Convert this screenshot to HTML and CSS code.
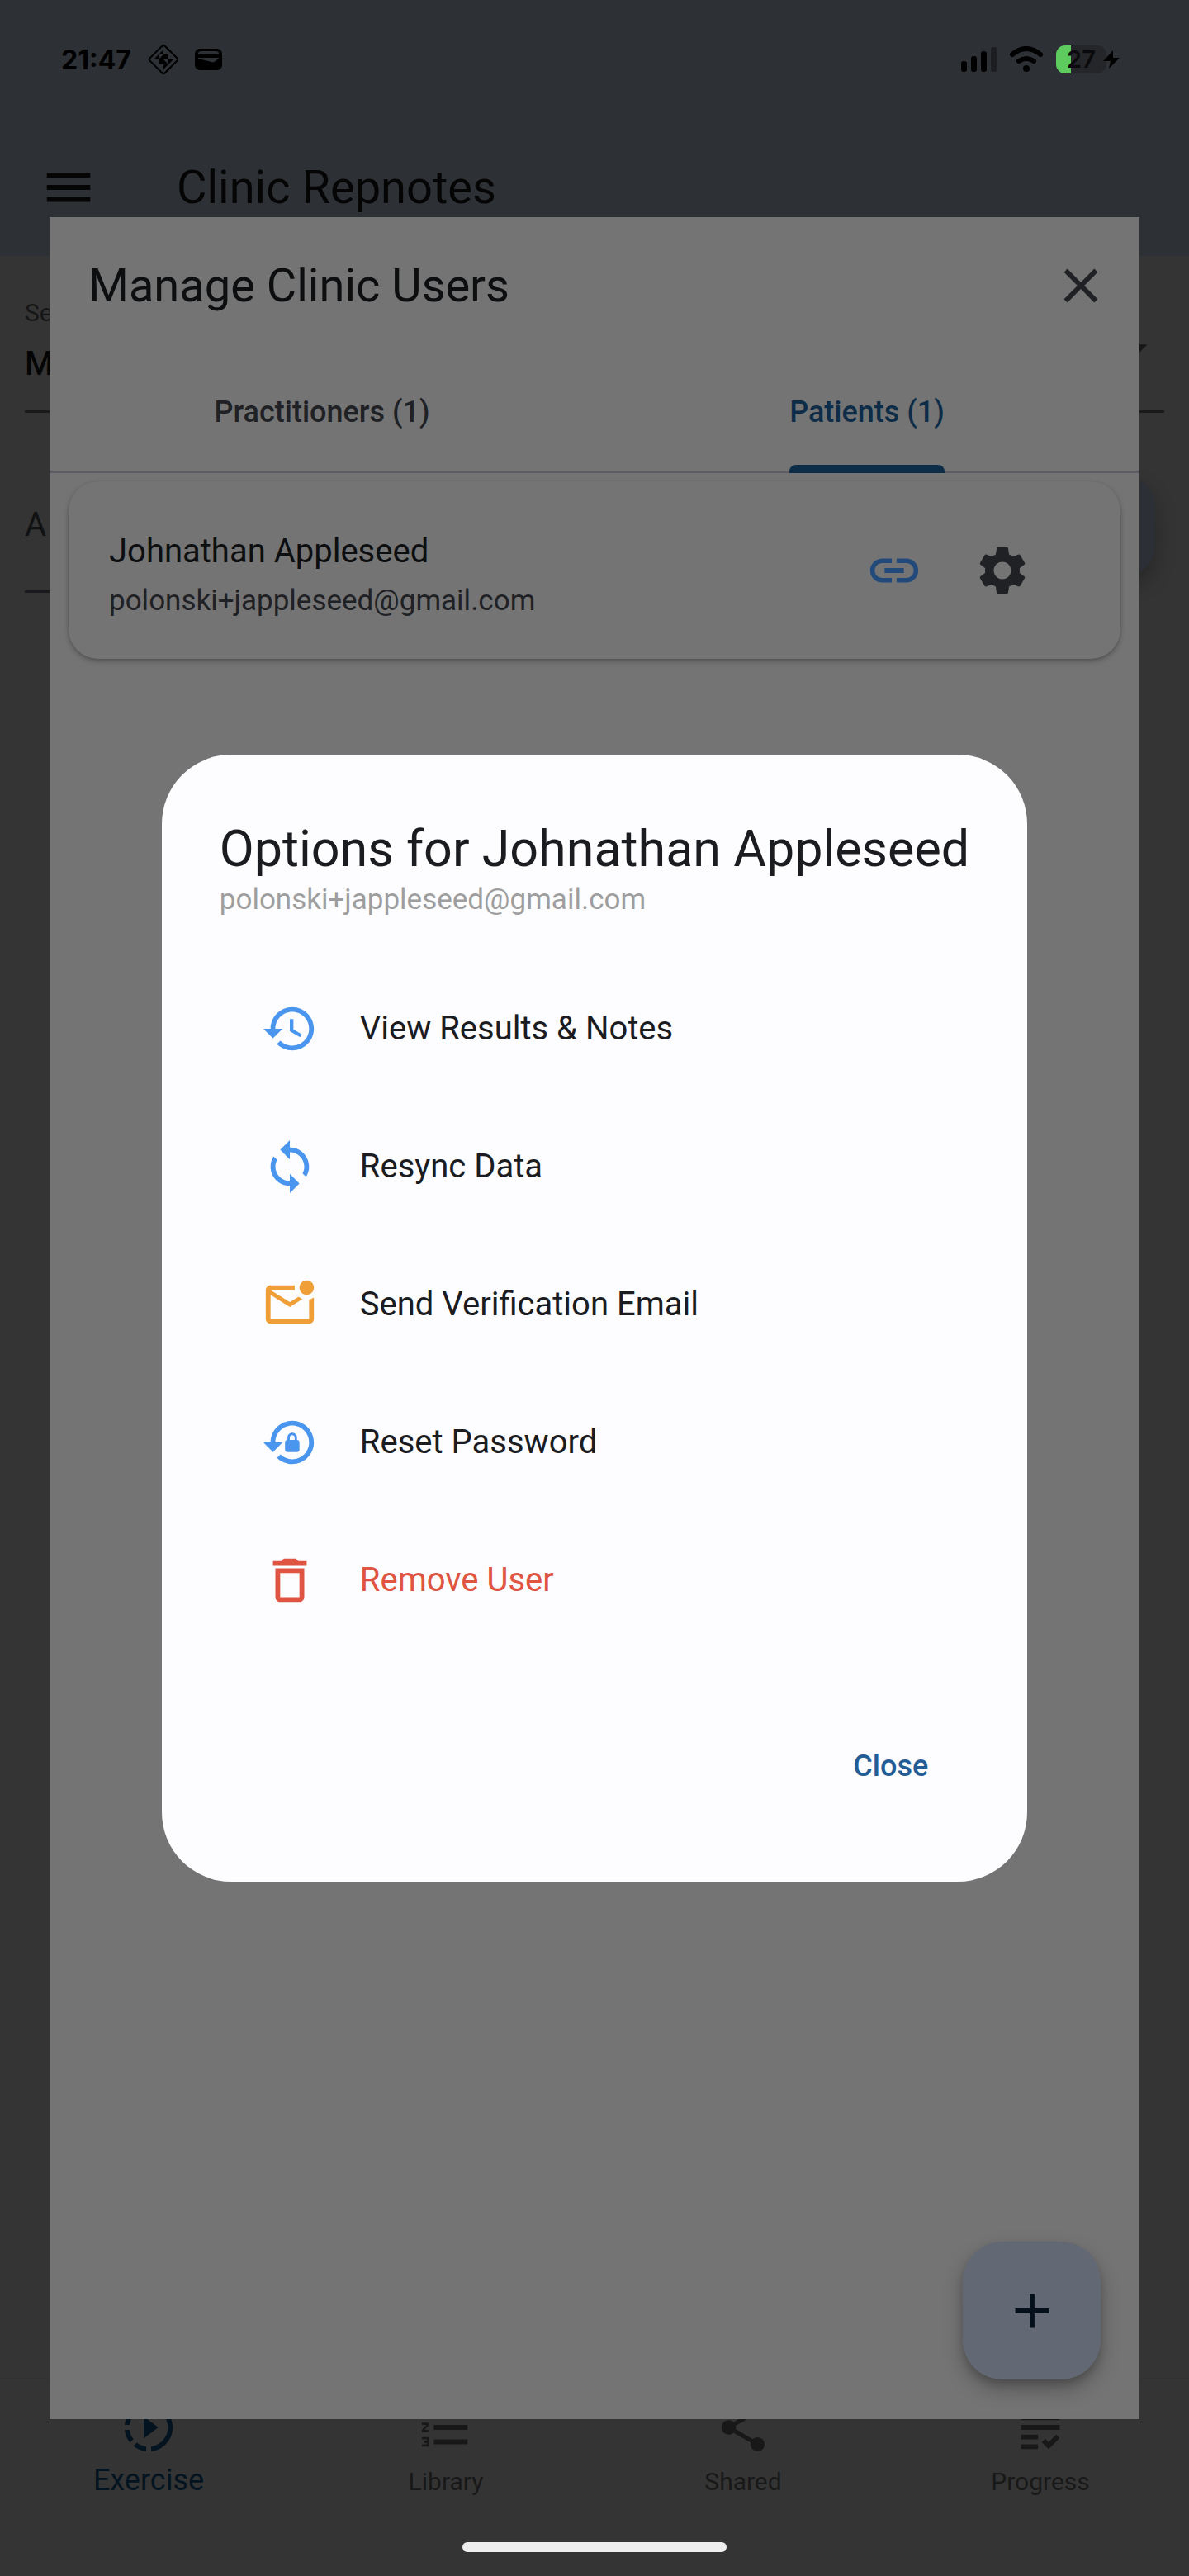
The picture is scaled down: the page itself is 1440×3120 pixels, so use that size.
FILE: index.html
```html
<!DOCTYPE html>
<html lang="en">
<head>
    <meta charset="UTF-8">
    <meta name="viewport" content="width=device-width, initial-scale=1.0">
    <title>Clinic Repnotes</title>
    <link rel="stylesheet" href="styles.css">
</head>
<body>
    <div class="app">
        <header class="app-header">
            <div class="status-bar">
                <div class="status-left">
                    <span class="status-time">21:47</span>
                    <svg class="status-diamond" viewBox="0 0 38 38">
                        <path d="M17.500 2.500q1.500-1.500 3 0l15 15q1.500 1.500 0 3l-15 15q-1.500 1.500-3 0l-15-15q-1.500-1.500 0-3z" fill="none" stroke="currentColor" stroke-width="2"/>
                        <path d="M19 7v6h-6zM13 13v6H7zM19 13v6h-6zM19 13l6 6h-6zM25 13v6l-6-6zM31 19l-6 6v-6zM13 19h6v6h-6zM19 19l6 6h-6zM25 25l-6 6v-6z" fill="currentColor"/>
                    </svg>
                    <svg class="status-wallet" viewBox="0 0 34 28">
                        <rect x="0" y="1" width="33" height="26" rx="6" fill="currentColor"/>
                        <path d="M4 8V7q0-3 4-3h17q4 0 4 3v1q-2-1-4-1H8q-2 0-4 1zM4 12h25v1q-2 1-4 3-2 2-5 1L4 13z" fill="#2d3035"/>
                    </svg>
                </div>
                <div class="status-right">
                    <svg class="status-signal" viewBox="0 0 43 30">
                        <rect x="0" y="17" width="7" height="13" rx="3" fill="currentColor"/>
                        <rect x="12" y="11" width="7" height="19" rx="3" fill="currentColor"/>
                        <rect x="24" y="5" width="7" height="25" rx="3" fill="currentColor"/>
                        <rect x="36" y="0" width="7" height="30" rx="3" fill="#1c1d20"/>
                    </svg>
                    <svg class="status-wifi" viewBox="0 0 42 32">
                        <path d="M4 10Q21-4 38 10M12 18Q21 12 30 18" fill="none" stroke="currentColor" stroke-width="6" stroke-linecap="round"/>
                        <circle cx="21" cy="27" r="4" fill="currentColor"/>
                    </svg>
                    <div class="battery"><span class="battery-level">27</span></div>
                    <svg class="status-bolt" viewBox="0 0 20 24">
                        <path d="M12 1L0 14h9L7 23 20 10h-8z" fill="currentColor"/>
                    </svg>
                </div>
            </div>
            <div class="app-bar">
                <button type="button" class="icon-button menu-button" aria-label="Menu">
                    <svg class="icon" viewBox="0 0 24 24"><path d="M3 18h18v-2H3v2zm0-5h18v-2H3v2zm0-7v2h18V6H3z"/></svg>
                </button>
                <h1 class="app-title">Clinic Repnotes</h1>
            </div>
        </header>

        <main class="page">
            <div class="field">
                <label class="field-label" for="session">Select</label>
                <div class="field-select">
                    <select id="session"><option>Manual</option></select>
                    <svg class="field-arrow" viewBox="0 0 24 24"><path d="M7 10l5 5 5-5z"/></svg>
                </div>
            </div>
            <div class="add-row">
                <input class="add-input" type="text" aria-label="Note" placeholder="A note">
                <button type="button" class="small-fab" aria-label="Add"></button>
            </div>
        </main>

        <nav class="bottom-nav">
            <a href="#" class="nav-item active">
                <svg class="icon" viewBox="0 0 24 24"><path d="M13.05 9.79L10 7.5v9l3.05-2.29L16 12zM11 4.07V2.05c-2.01.2-3.84 1-5.32 2.21L7.1 5.69c1.11-.86 2.44-1.44 3.9-1.62zM5.69 7.1L4.26 5.68C3.05 7.16 2.25 8.99 2.05 11h2.02c.18-1.46.76-2.79 1.62-3.9zM4.07 13H2.05c.2 2.01 1 3.84 2.21 5.32l1.43-1.43c-.86-1.1-1.44-2.43-1.62-3.89zm1.61 6.74C7.16 20.95 9 21.75 11 21.95v-2.02c-1.46-.18-2.79-.76-3.9-1.62l-1.42 1.43zM22 12c0 5.16-3.92 9.42-8.95 9.95v-2.02C16.97 19.41 20 16.05 20 12s-3.03-7.41-6.95-7.93V2.05C18.08 2.58 22 6.84 22 12z"/></svg>
                <span>Exercise</span>
            </a>
            <a href="#" class="nav-item">
                <svg class="icon" viewBox="0 0 24 24"><path d="M2 17h2v.5H3v1h1v.5H2v1h3v-4H2v1zm1-9h1V4H2v1h1v3zm-1 3h1.800L2 13.100v.9h3v-1H3.200L5 10.900V10H2v1zm5-6v2h14V5H7zm0 14h14v-2H7v2zm0-6h14v-2H7v2z"/></svg>
                <span>Library</span>
            </a>
            <a href="#" class="nav-item">
                <svg class="icon" viewBox="0 0 24 24"><path d="M18 16.080c-.76 0-1.440.3-1.960.770L8.910 12.700c.05-.23.090-.46.090-.7s-.04-.47-.09-.7l7.050-4.110c.54.5 1.250.81 2.040.81 1.660 0 3-1.340 3-3s-1.340-3-3-3-3 1.340-3 3c0 .24.040.47.090.7L8.040 9.810C7.500 9.310 6.790 9 6 9c-1.660 0-3 1.340-3 3s1.340 3 3 3c.79 0 1.500-.31 2.040-.81l7.120 4.160c-.05.21-.08.43-.08.65 0 1.610 1.310 2.920 2.920 2.920s2.920-1.310 2.920-2.920-1.310-2.920-2.920-2.920z"/></svg>
                <span>Shared</span>
            </a>
            <a href="#" class="nav-item">
                <svg class="icon" viewBox="0 0 24 24"><path d="M4 7h16v2H4V7zm0 6h16v-2H4v2zm0 4h7v-2H4v2zm0 4h7v-2H4v2zm11.410-2.830L14 16.750l-1.410 1.410L15.410 21 20 16.420 18.580 15l-3.170 3.170zM4 3v2h16V3H4z"/></svg>
                <span>Progress</span>
            </a>
        </nav>
        <div class="home-indicator"></div>
    </div>

    <!-- Manage users -->
    <section class="modal" aria-label="Manage Clinic Users">
        <div class="modal-header">
            <h2 class="modal-title">Manage Clinic Users</h2>
            <button type="button" class="icon-button" aria-label="Close">
                <svg class="icon" viewBox="0 0 24 24"><path d="M19 6.410L17.590 5 12 10.590 6.410 5 5 6.410 10.590 12 5 17.590 6.410 19 12 13.410 17.590 19 19 17.590 13.410 12z"/></svg>
            </button>
        </div>
        <div class="tabs" role="tablist">
            <button type="button" class="tab" role="tab"><span>Practitioners (1)</span></button>
            <button type="button" class="tab active" role="tab"><span>Patients (1)</span></button>
        </div>
        <div class="user-card">
            <div class="user-info">
                <div class="user-name">Johnathan Appleseed</div>
                <div class="user-email">polonski+jappleseed@gmail.com</div>
            </div>
            <button type="button" class="icon-button link-button" aria-label="Link">
                <svg class="icon" viewBox="0 0 24 24"><path d="M3.900 12c0-1.710 1.390-3.100 3.100-3.100h4V7H7c-2.760 0-5 2.240-5 5s2.240 5 5 5h4v-1.900H7c-1.710 0-3.100-1.390-3.100-3.100zM8 13h8v-2H8v2zm9-6h-4v1.900h4c1.710 0 3.100 1.390 3.100 3.100s-1.390 3.100-3.100 3.100h-4V17h4c2.760 0 5-2.240 5-5s-2.240-5-5-5z"/></svg>
            </button>
            <button type="button" class="icon-button" aria-label="Settings">
                <svg class="icon" viewBox="0 0 24 24"><path d="M19.140 12.940c.04-.3.060-.61.060-.94 0-.32-.02-.64-.07-.94l2.030-1.580c.18-.14.230-.41.120-.61l-1.920-3.320c-.12-.22-.37-.29-.59-.22l-2.390.96c-.5-.38-1.030-.7-1.620-.94l-.36-2.540c-.04-.24-.24-.41-.48-.41h-3.840c-.24 0-.43.170-.47.410l-.36 2.540c-.59.240-1.130.57-1.620.94l-2.390-.96c-.22-.08-.47 0-.59.220L2.740 8.870c-.12.210-.08.470.12.610l2.030 1.580c-.05.3-.09.630-.09.940s.02.640.07.940l-2.030 1.580c-.18.140-.23.410-.12.610l1.920 3.320c.12.220.37.290.59.220l2.390-.96c.5.380 1.030.7 1.620.94l.36 2.540c.05.240.24.410.48.410h3.840c.24 0 .44-.17.470-.41l.36-2.540c.59-.24 1.130-.56 1.620-.94l2.390.96c.22.080.47 0 .59-.22l1.920-3.320c.12-.22.070-.47-.12-.61l-2.010-1.580zM12 15.600c-1.980 0-3.600-1.620-3.600-3.600s1.620-3.600 3.600-3.600 3.600 1.620 3.600 3.600-1.620 3.600-3.600 3.600z"/></svg>
            </button>
        </div>
        <button type="button" class="fab" aria-label="Add user">
            <svg class="icon" viewBox="0 0 24 24"><path d="M19 13h-6v6h-2v-6H5v-2h6V5h2v6h6v2z"/></svg>
        </button>
    </section>

    <!-- User options -->
    <div class="overlay">
        <div class="dialog" role="dialog" aria-label="User options">
            <h2 class="dialog-title">Options for Johnathan Appleseed</h2>
            <div class="dialog-email">polonski+jappleseed@gmail.com</div>
            <div class="options">
                <button type="button" class="option">
                    <svg class="icon blue" viewBox="0 0 24 24"><path d="M13 3c-4.970 0-9 4.030-9 9H1l3.890 3.890.07.140L9 12H6c0-3.870 3.130-7 7-7s7 3.130 7 7-3.130 7-7 7c-1.930 0-3.680-.79-4.940-2.060l-1.420 1.420C8.270 19.990 10.510 21 13 21c4.970 0 9-4.030 9-9s-4.030-9-9-9zm-1 5v5l4.280 2.540.72-1.210-3.500-2.080V8H12z"/></svg>
                    <span>View Results &amp; Notes</span>
                </button>
                <button type="button" class="option">
                    <svg class="icon blue" viewBox="0 0 24 24"><path d="M12 4V1L8 5l4 4V6c3.310 0 6 2.690 6 6 0 1.010-.25 1.970-.7 2.800l1.460 1.460C19.540 15.030 20 13.570 20 12c0-4.420-3.580-8-8-8zm0 14c-3.310 0-6-2.690-6-6 0-1.010.25-1.970.7-2.800L5.240 7.740C4.460 8.970 4 10.430 4 12c0 4.420 3.580 8 8 8v3l4-4-4-4v3z"/></svg>
                    <span>Resync Data</span>
                </button>
                <button type="button" class="option">
                    <svg class="icon orange" viewBox="0 0 24 24"><path d="M22 8.980V18c0 1.100-.9 2-2 2H4c-1.100 0-2-.9-2-2V6c0-1.100.9-2 2-2h10.100c-.06.320-.1.660-.1 1s.04.680.1 1H4l8 5 3.670-2.290c.47.430 1.020.76 1.630.98L12 13 4 8v10h16V9.900c.74-.15 1.420-.48 2-.92zM16 5c0 1.660 1.340 3 3 3s3-1.340 3-3-1.340-3-3-3-3 1.340-3 3z"/></svg>
                    <span>Send Verification Email</span>
                </button>
                <button type="button" class="option">
                    <svg class="icon blue" viewBox="0 0 24 24"><path d="M13 3c-4.970 0-9 4.030-9 9H1l4 4 4-4H6c0-3.860 3.140-7 7-7s7 3.140 7 7-3.140 7-7 7c-1.900 0-3.620-.76-4.880-1.990L6.700 18.420C8.320 20.010 10.550 21 13 21c4.970 0 9-4.030 9-9s-4.030-9-9-9zm2 8v-1c0-1.100-.9-2-2-2s-2 .9-2 2v1c-.55 0-1 .45-1 1v3c0 .55.45 1 1 1h4c.55 0 1-.45 1-1v-3c0-.55-.45-1-1-1zm-1 0h-2v-1c0-.55.45-1 1-1s1 .45 1 1v1z"/></svg>
                    <span>Reset Password</span>
                </button>
                <button type="button" class="option remove">
                    <svg class="icon" viewBox="0 0 24 24"><path d="M6 19c0 1.100.9 2 2 2h8c1.100 0 2-.9 2-2V7H6v12zM8 9h8v10H8V9zm7.500-5l-1-1h-5l-1 1H5v2h14V4z"/></svg>
                    <span>Remove User</span>
                </button>
            </div>
            <div class="dialog-actions">
                <button type="button" class="close-button">Close</button>
            </div>
        </div>
    </div>
</body>
</html>
```

FILE: styles.css
```css
* {
    box-sizing: border-box;
}
body {
    font-family: Roboto, "Liberation Sans", sans-serif;
    margin: 0;
    background-color: #343434;
    color: #050505;
}
h1, h2 {
    margin: 0;
    font-weight: 400;
}
button, input, select {
    font-family: inherit;
    border: none;
    background: none;
    padding: 0;
    margin: 0;
    color: inherit;
}
button {
    cursor: pointer;
}
.icon {
    display: block;
    width: 70px;
    height: 70px;
    fill: currentColor;
    flex-shrink: 0;
}
.icon-button {
    display: block;
}
.app {
    min-height: 100vh;
    display: flex;
    flex-direction: column;
}

/* Header */
.app-header {
    height: 310px;
    background-color: #2d3035;
}
.status-bar {
    height: 144px;
    padding: 0 84px 0 74px;
    display: flex;
    justify-content: space-between;
    align-items: center;
    color: #000;
}
.status-left, .status-right {
    display: flex;
    align-items: center;
}
.status-time {
    font-family: Inter, sans-serif;
    font-size: 32px;
    font-weight: 700;
    margin-right: 20px;
}
.status-diamond {
    width: 38px;
    height: 38px;
    margin-right: 19px;
}
.status-wallet {
    width: 34px;
    height: 28px;
}
.status-signal {
    width: 43px;
    height: 30px;
    margin-right: 15px;
}
.status-wifi {
    width: 42px;
    height: 32px;
    margin-right: 15px;
}
.battery {
    width: 61px;
    height: 34px;
    border-radius: 11px;
    background: linear-gradient(to right, #5dcb5d 18px, #242629 18px);
    text-align: center;
}
.battery-level {
    font-family: Inter, sans-serif;
    font-size: 29px;
    line-height: 34px;
    font-weight: 600;
    color: #0a0a0c;
}
.status-bolt {
    width: 20px;
    height: 24px;
    margin-left: -4px;
}
.app-bar {
    height: 166px;
    padding: 0 48px;
    display: flex;
    align-items: center;
}
.menu-button {
    margin-right: 96px;
}
.app-title {
    font-size: 56px;
    line-height: 64px;
}

/* Page under the modal */
.page {
    flex: 1;
    padding: 52px 30px 0;
}
.field {
    border-bottom: 3px solid #1a1a1a;
}
.field-label {
    display: block;
    font-size: 30px;
    line-height: 34px;
    color: #161616;
}
.field-select {
    display: flex;
    align-items: center;
    height: 101px;
}
.field-select select {
    flex: 1;
    appearance: none;
    font-size: 40px;
    font-weight: 500;
    height: 64px;
    margin-bottom: 12px;
}
.field-arrow {
    width: 70px;
    height: 70px;
    margin-bottom: 48px;
    fill: #161616;
}
.add-row {
    display: flex;
    align-items: center;
    margin-top: 56px;
    height: 162px;
    gap: 20px;
}
.add-input {
    flex: 1;
    height: 162px;
    font-size: 40px;
    border-bottom: 3px solid #18191c;
}
.add-input::placeholder {
    color: #101113;
}
.small-fab {
    width: 120px;
    height: 120px;
    margin-right: 11px;
    border-radius: 36px;
    background-color: #2c3036;
    box-shadow: 0 12px 24px rgba(0, 0, 0, 0.25);
}

/* Bottom navigation */
.bottom-nav {
    display: flex;
    height: 199px;
    border-top: 1px solid #313131;
    padding-top: 24px;
}
.nav-item {
    flex: 1;
    display: flex;
    flex-direction: column;
    align-items: center;
    gap: 10px;
    color: #181818;
    text-decoration: none;
    font-size: 30px;
    line-height: 42px;
}
.nav-item.active {
    gap: 8px;
    color: #03131f;
    font-size: 36px;
}
.home-indicator {
    width: 320px;
    height: 12px;
    border-radius: 6px;
    background-color: #eee;
    margin: 0 auto 29px;
}

/* Manage users modal */
.modal {
    position: fixed;
    inset: 263px 60px 190px;
    background-color: #747474;
    color: #202125;
}
.modal-header {
    display: flex;
    justify-content: space-between;
    align-items: center;
    height: 165px;
    padding: 0 36px 0 47px;
}
.modal-title {
    font-size: 56px;
    line-height: 64px;
    color: #0d0e10;
}
.tabs {
    display: flex;
    height: 145px;
    border-bottom: 3px solid #5d5d63;
}
.tab {
    flex: 1;
    display: flex;
    justify-content: center;
    font-size: 36px;
    font-weight: 500;
    line-height: 42px;
}
.tab span {
    display: flex;
    flex-direction: column;
    justify-content: space-between;
    height: 145px;
    padding-top: 50px;
}
.tab.active {
    color: #0d2c48;
}
.tab.active span::after {
    content: "";
    height: 10px;
    border-radius: 8px 8px 0 0;
    background-color: #0d2c48;
}
.user-card {
    display: flex;
    align-items: center;
    margin: 10px 23px;
    height: 215px;
    padding: 0 108px 0 49px;
    border-radius: 36px;
    background-color: #747474;
    box-shadow: 0 3px 6px rgba(0, 0, 0, 0.25), 0 1px 3px rgba(0, 0, 0, 0.1);
}
.user-info {
    flex: 1;
    padding-top: 14px;
}
.user-name {
    font-size: 40px;
    line-height: 60px;
    color: #0d0e10;
}
.user-email {
    font-size: 35px;
    line-height: 60px;
}
.link-button {
    color: #21497a;
    margin-right: 61px;
}
.fab {
    position: absolute;
    right: 47px;
    bottom: 48px;
    width: 167px;
    height: 167px;
    display: grid;
    place-items: center;
    border-radius: 48px;
    background-color: #636974;
    color: #030f1a;
    box-shadow: 0 12px 24px rgba(0, 0, 0, 0.25), 0 6px 10px rgba(0, 0, 0, 0.15);
}

/* Options dialog */
.overlay {
    position: fixed;
    inset: 0;
    padding: 263px 60px 190px;
    display: grid;
    place-items: center;
}
.dialog {
    padding: 74px 70px 68px;
    border-radius: 84px;
    background-color: #fdfdff;
    color: #1b1c1f;
}
.dialog-title {
    font-size: 61px;
    line-height: 80px;
}
.dialog-email {
    font-size: 35px;
    line-height: 44px;
    color: #9e9e9e;
}
.options {
    display: flex;
    flex-direction: column;
    padding: 50px 50px 0;
}
.option {
    display: flex;
    align-items: center;
    gap: 50px;
    height: 167px;
    font-size: 40px;
    text-align: left;
}
.blue {
    color: #4a96ee;
}
.orange {
    color: #f09f38;
}
.remove {
    color: #e05542;
}
.dialog-actions {
    display: flex;
    justify-content: flex-end;
    padding-top: 70px;
}
.close-button {
    font-size: 36px;
    font-weight: 500;
    line-height: 144px;
    padding: 0 50px;
    color: #245d96;
}
```
